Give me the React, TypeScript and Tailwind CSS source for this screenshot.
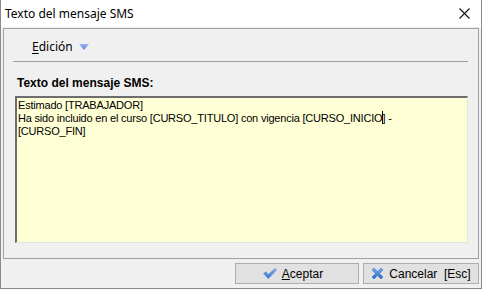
export default function App() {
  const ui = { fontFamily: '"Noto Sans", "Liberation Sans", sans-serif' };
  const classic = { fontFamily: '"Liberation Sans", Arial, sans-serif' };

  return (
    <div className="w-[482px] h-[289px] bg-[#f0f0f0] border-l border-r border-b border-[#8a8a8a] flex flex-col overflow-hidden">
      {/* title bar */}
      <div className="h-[27px] shrink-0 bg-white flex items-center justify-between pl-[4px] pr-[10px]">
        <span className="text-[12px] text-black" style={ui}>
          Texto del mensaje SMS
        </span>
        <svg width="11" height="11" viewBox="0 0 11 11" className="mr-[1px]">
          <path d="M0.5 0.5 L10.5 10.5 M10.5 0.5 L0.5 10.5" stroke="#111" strokeWidth="1.1" />
        </svg>
      </div>

      {/* main panel */}
      <div className="mt-[1px] mx-[2px] h-[231px] border border-[#a0a0a0] flex flex-col">
        <div className="h-[32px] flex items-center pl-[28px] pt-[3px]">
          <span className="text-[12px] text-black" style={ui}>
            <span className="underline underline-offset-2">E</span>dición
          </span>
          <svg width="10" height="6" viewBox="0 0 10 6" className="ml-[6px] mt-[1px]">
            <defs>
              <linearGradient id="tri" x1="0" y1="0" x2="0" y2="1">
                <stop offset="0" stopColor="#9ab4ee" />
                <stop offset="1" stopColor="#5c84dc" />
              </linearGradient>
            </defs>
            <path d="M0 0 H10 L5 6 Z" fill="url(#tri)" />
          </svg>
        </div>
        <div className="ml-[9px] mr-[10px] h-px bg-[#a0a0a0]" />

        <div className="pl-[13px] pt-[14px] text-[12px] font-bold text-black leading-[14px]" style={classic}>
          Texto del mensaje SMS:
        </div>

        <div
          className="mt-[6px] ml-[11px] mr-[10px] h-[147px] bg-[#ffffd5] border-t-2 border-l-2 border-t-[#6d6d6d] border-l-[#6d6d6d] border-r border-b border-r-[#e3e3e3] border-b-[#e3e3e3] pl-[1px] pt-[1px] text-[11px] leading-[13px] text-black tracking-[-0.2px]"
          style={classic}
        >
          <div>Estimado [TRABAJADOR]</div>
          <div>
            Ha sido incluido en el curso [CURSO_TITULO] con vigencia [CURSO_INICIO
            <span className="relative">
              <span className="absolute left-0 top-[-1px] w-px h-[13px] bg-black" />]
            </span>{" "}
            -
          </div>
          <div>[CURSO_FIN]</div>
        </div>
      </div>

      {/* buttons */}
      <div className="flex justify-end gap-[4px] pr-[2px] mt-[4px]">
        <button
          className="w-[124px] h-[21px] bg-[#e1e1e1] border border-[#adadad] flex items-center justify-center gap-[5px] text-[12px] text-black"
          style={classic}
        >
          <svg width="14" height="11" viewBox="0 0 14 11">
            <defs>
              <linearGradient id="chk" x1="0" y1="0" x2="0" y2="1">
                <stop offset="0" stopColor="#8db3ee" />
                <stop offset="1" stopColor="#2f6fd0" />
              </linearGradient>
            </defs>
            <path d="M0.5 5.5 L3 3.8 L5.3 6.6 L12 0.5 L13.5 2 L5.3 10.5 Z" fill="url(#chk)" stroke="#4a7fd4" strokeWidth="0.6" />
          </svg>
          <span className="mr-[8px]">
            <span className="underline underline-offset-1">A</span>ceptar
          </span>
        </button>
        <button
          className="w-[116px] h-[21px] bg-[#e1e1e1] border border-[#adadad] flex items-center justify-center gap-[5px] text-[12px] text-black"
          style={classic}
        >
          <svg width="13" height="13" viewBox="0 0 13 13">
            <defs>
              <linearGradient id="xg" x1="0" y1="0" x2="0" y2="1">
                <stop offset="0" stopColor="#7fb0f0" />
                <stop offset="1" stopColor="#2563c9" />
              </linearGradient>
            </defs>
            <path
              d="M1 3 L3 1 L6.5 4.5 L10 1 L12 3 L8.5 6.5 L12 10 L10 12 L6.5 8.5 L3 12 L1 10 L4.5 6.5 Z"
              fill="url(#xg)"
              stroke="#3a72cc"
              strokeWidth="0.6"
            />
          </svg>
          <span>Cancelar&nbsp; [Esc]</span>
        </button>
      </div>
    </div>
  );
}
